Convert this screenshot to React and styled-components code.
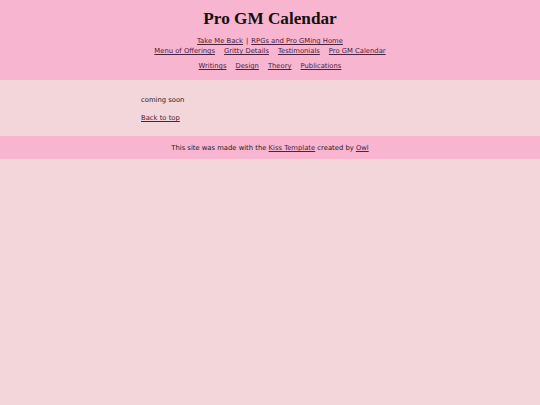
import React from "react";
import styled, { createGlobalStyle } from "styled-components";

const GlobalStyle = createGlobalStyle`
  html, body {
    margin: 0;
    padding: 0;
    background-color: #f2d6d9;
    font-family: "DejaVu Sans", sans-serif;
    font-size: 6.8px;
    color: #222;
  }
`;

const HeaderDiv = styled.header`
  background-color: #f7b5cf;
  text-align: center;
  padding: 10px 0 10px;
  height: 80px;
  box-sizing: border-box;
`;

const Title = styled.h1`
  font-family: "Liberation Serif", serif;
  font-size: 17.2px;
  font-weight: 700;
  color: #111;
  margin: 0 0 8px;
  line-height: 18px;
`;

const NavBlock = styled.div`
  line-height: 10px;
  margin-bottom: ${(props) => props.gap || 0}px;
`;

const NavRow = styled.div`
  display: flex;
  justify-content: center;
  gap: 9px;
`;

const Link = styled.a`
  color: #4b2240;
  text-decoration: underline;
`;

const Sep = styled.span`
  margin: 0 3px;
`;

const Main = styled.main`
  width: 258px;
  margin: 0 auto;
  padding: 15px 0 13px;
  line-height: 10px;
`;

const Para = styled.p`
  margin: 0 0 8px;
  &:last-child {
    margin-bottom: 0;
  }
`;

const FooterDiv = styled.footer`
  background-color: #f7b5cf;
  text-align: center;
  height: 23px;
  box-sizing: border-box;
  padding-top: 1px;
  line-height: 22px;
`;

function App() {
  return (
    <>
      <GlobalStyle />
      <HeaderDiv>
        <Title>Pro GM Calendar</Title>
        <NavBlock gap={5}>
          <div>
            <Link href="#">Take Me Back</Link>
            <Sep>|</Sep>
            <Link href="#">RPGs and Pro GMing Home</Link>
          </div>
          <NavRow>
            <Link href="#">Menu of Offerings</Link>
            <Link href="#">Gritty Details</Link>
            <Link href="#">Testimonials</Link>
            <Link href="#">Pro GM Calendar</Link>
          </NavRow>
        </NavBlock>
        <NavBlock>
          <NavRow>
            <Link href="#">Writings</Link>
            <Link href="#">Design</Link>
            <Link href="#">Theory</Link>
            <Link href="#">Publications</Link>
          </NavRow>
        </NavBlock>
      </HeaderDiv>
      <Main>
        <Para>coming soon</Para>
        <Para>
          <Link href="#">Back to top</Link>
        </Para>
      </Main>
      <FooterDiv>
        This site was made with the <Link href="#">Kiss Template</Link> created
        by <Link href="#">Owl</Link>
      </FooterDiv>
    </>
  );
}

export default App;
